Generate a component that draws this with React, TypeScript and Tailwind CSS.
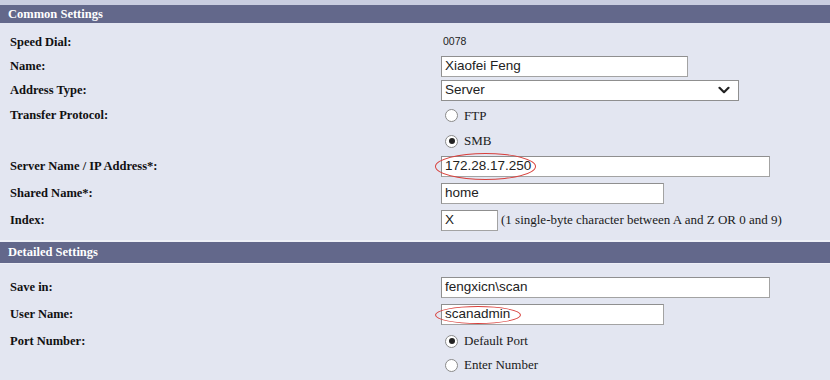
import React from 'react';

const serif = "font-['Liberation_Serif','Times_New_Roman',serif]";
const sans = "font-['Liberation_Sans',Arial,sans-serif]";

function SectionHeader({ title, className = '' }: { title: string; className?: string }) {
	return (
		<div className={`flex items-center bg-[#63688b] pl-[8px] ${className}`}>
			<span className={`${serif} text-[12.5px] font-bold text-white`}>{title}</span>
		</div>
	);
}

function Row({ label, height, children }: { label?: string; height: string; children?: React.ReactNode }) {
	return (
		<div className={`flex items-center ${height}`}>
			<div className={`w-[441px] shrink-0 pl-[10px] ${serif} text-[12.5px] font-bold text-[#111]`}>{label}</div>
			<div className="flex items-center">{children}</div>
		</div>
	);
}

function TextBox({ value, width }: { value: string; width: string }) {
	return (
		<div
			className={`flex h-[21px] items-center border border-[#a3a3a3] border-t-[#8f8f8f] border-l-[#8f8f8f] bg-white pl-[3px] ${sans} text-[13.5px] text-[#222] ${width}`}
		>
			{value}
		</div>
	);
}

function Radio({ label, checked }: { label: string; checked?: boolean }) {
	return (
		<div className="flex items-center">
			<span className="ml-[4px] flex h-[13px] w-[13px] items-center justify-center rounded-full border border-[#8a8a8a] bg-white">
				{checked && <span className="h-[6px] w-[6px] rounded-full bg-[#222]" />}
			</span>
			<span className={`ml-[6px] ${serif} text-[13px] text-[#1a1a1a]`}>{label}</span>
		</div>
	);
}

function Ellipse({ className }: { className: string }) {
	return <span className={`pointer-events-none absolute rounded-[50%] border border-[#d8403c] ${className}`} />;
}

export default function App() {
	return (
		<div className="h-[380px] w-[830px] overflow-hidden bg-[#e3e6f1]">
			<div className="h-[5px] bg-[#c9cde0]" />
			<SectionHeader title="Common Settings" className="h-[18px]" />

			{/* Common settings rows */}
			<div className="pt-[7px]">
				<Row label="Speed Dial:" height="h-[24px]">
					<span className={`ml-[2px] ${sans} text-[10.5px] text-[#222]`}>0078</span>
				</Row>
				<Row label="Name:" height="h-[24px]">
					<TextBox value="Xiaofei Feng" width="w-[247px]" />
				</Row>
				<Row label="Address Type:" height="h-[24px]">
					<div className={`flex h-[21px] w-[298px] items-center justify-between border border-[#8f8f8f] bg-white pl-[3px] pr-[8px] ${sans} text-[13.5px] text-[#222]`}>
						<span>Server</span>
						<svg width="12" height="8" viewBox="0 0 12 8" fill="none">
							<path d="M1.5 1.8 L6 6.2 L10.5 1.8" stroke="#222" strokeWidth="2.2" strokeLinecap="round" strokeLinejoin="round" />
						</svg>
					</div>
				</Row>
				<Row label="Transfer Protocol:" height="h-[27px]">
					<Radio label="FTP" />
				</Row>
				<Row height="h-[24px]">
					<Radio label="SMB" checked />
				</Row>
				<Row label="Server Name / IP Address*:" height="h-[26px]">
					<div className="relative">
						<TextBox value="172.28.17.250" width="w-[329px]" />
						<Ellipse className="-left-[6px] -top-[3px] h-[27px] w-[101px]" />
					</div>
				</Row>
				<Row label="Shared Name*:" height="h-[28px]">
					<TextBox value="home" width="w-[223px]" />
				</Row>
				<Row label="Index:" height="h-[26px]">
					<TextBox value="X" width="w-[57px]" />
					<span className={`ml-[3px] ${serif} text-[13px] text-[#1a1a1a]`}>
						(1 single-byte character between A and Z OR 0 and 9)
					</span>
				</Row>
			</div>

			<div className="mt-[7px] h-[2px] bg-[#eef0f7]" />
			<SectionHeader title="Detailed Settings" className="h-[21px]" />
			<div className="h-[1px] bg-[#eceef6]" />

			{/* Detailed settings rows */}
			<div className="pt-[11px]">
				<Row label="Save in:" height="h-[24px]">
					<TextBox value="fengxicn\scan" width="w-[329px]" />
				</Row>
				<Row label="User Name:" height="h-[30px]">
					<div className="relative">
						<TextBox value="scanadmin" width="w-[223px]" />
						<Ellipse className="-left-[6px] top-[2px] h-[18px] w-[86px]" />
					</div>
				</Row>
				<Row label="Port Number:" height="h-[24px]">
					<Radio label="Default Port" checked />
				</Row>
				<Row height="h-[24px]">
					<Radio label="Enter Number" />
				</Row>
			</div>
		</div>
	);
}
